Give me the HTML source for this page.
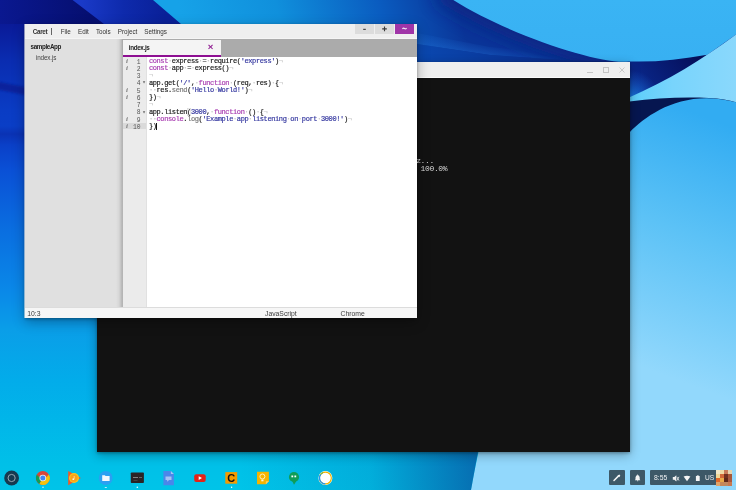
<!DOCTYPE html>
<html><head><meta charset="utf-8">
<style>
*{margin:0;padding:0;box-sizing:border-box}
html,body{width:736px;height:490px;overflow:hidden;background:#0a60c8}
body{position:relative;font-family:"Liberation Sans",sans-serif;-webkit-font-smoothing:antialiased}
#wall{position:absolute;left:0;top:0}
.abs{position:absolute}
#caret,#term{will-change:transform}
/* terminal */
#term{left:97px;top:62px;width:533px;height:390px;background:#121212;box-shadow:0 1px 3px rgba(0,0,0,.3),0 3px 10px rgba(0,0,0,.3)}
#term .tb{position:absolute;left:0;top:0;width:100%;height:16px;background:#efefef;border-bottom:1px solid #fafafa}
#term .txt{position:absolute;left:0;top:156px;font-family:"Liberation Mono",monospace;font-size:8px;letter-spacing:-0.37px;line-height:7.3px;color:#d8d8d8;white-space:pre}
/* caret */
#caret{left:25px;top:24px;width:392px;height:294px;background:#e1e1e1;box-shadow:-0.6px 0 0 0 #e6e6e6,0 1px 3px rgba(0,0,0,.3),0 4px 12px rgba(0,0,0,.3)}
#menu{position:absolute;left:0;top:0;width:100%;height:15.2px;background:#efefef;box-shadow:inset 0 -1px #f5f5f5;font-size:6.3px;color:#333}
#menu span{position:absolute;top:3.5px}
.btn{position:absolute;top:0;height:10px;width:19px;background:#dcdcdc}
#side{position:absolute;left:0;top:15.2px;width:98.2px;height:268.8px;background:linear-gradient(90deg,#e0e0e0 0,#e0e0e0 91px,#d6d6d6 94px,#c2c2c2 96px,#b2b2b2 97.2px,#bababa 98.2px)}
#tabs{position:absolute;left:97px;top:15.2px;width:295px;height:17.8px;background:#ababab}
#tab{position:absolute;left:0.8px;top:0.8px;width:98.2px;height:17px;background:#f4f4f4;border-bottom:2px solid #8e0f92}
#gut{position:absolute;left:98.2px;top:33px;width:23.3px;height:251px;background:#ebebeb}
#code{position:absolute;left:121.5px;top:33px;width:270.5px;height:251px;background:#fff}
#status{position:absolute;left:0;top:282.7px;width:100%;height:11.3px;background:#f6f6f6;border-top:1px solid #dcdcdc;font-size:6.8px;color:#3a3a3a}
.ln{position:absolute;font-family:"Liberation Mono",monospace;font-size:6.37px;line-height:7.27px;white-space:pre;color:#222}
.k{color:#a83cb0}.p{color:#7a7a7a}.s{color:#3538a0}.n{color:#3538a0}.w{color:#c8c8c8}.g{color:#999}
/* shelf */
.ico{position:absolute;top:471px;width:14px;height:14px}
.dot{position:absolute;top:485.5px;width:1.5px;height:1.5px;background:#fff;border-radius:50%}
.sb{position:absolute;top:470px;height:15px;background:#3d5867;border-radius:1px}
</style></head><body>
<svg id="wall" width="736" height="490" viewBox="0 0 736 490">
<defs>
<linearGradient id="gBase" gradientUnits="userSpaceOnUse" x1="0" y1="0" x2="0" y2="490">
<stop offset="0.0000" stop-color="#0a1890"/>
<stop offset="0.0490" stop-color="#0a1a98"/>
<stop offset="0.1224" stop-color="#0a2cb0"/>
<stop offset="0.2245" stop-color="#0a3cc4"/>
<stop offset="0.2571" stop-color="#0a3ec6"/>
<stop offset="0.2735" stop-color="#0a32b4"/>
<stop offset="0.2959" stop-color="#0a40c8"/>
<stop offset="0.3469" stop-color="#0a50d6"/>
<stop offset="0.4694" stop-color="#0a6ee0"/>
<stop offset="0.5918" stop-color="#0a88e8"/>
<stop offset="0.6735" stop-color="#0a9ee8"/>
<stop offset="0.7755" stop-color="#02acea"/>
<stop offset="0.9469" stop-color="#00c0e8"/>
<stop offset="1.0000" stop-color="#00c4e8"/>
</linearGradient>
<linearGradient id="gBand" gradientUnits="userSpaceOnUse" x1="82" y1="0" x2="165" y2="0">
<stop offset="0" stop-color="#1a3ac8"/>
<stop offset="0.5" stop-color="#0e2aac"/>
<stop offset="1" stop-color="#0a2098"/>
</linearGradient>
<linearGradient id="gDark" gradientUnits="userSpaceOnUse" x1="0" y1="0" x2="90" y2="0">
<stop offset="0" stop-color="#0a1890"/>
<stop offset="1" stop-color="#060f70"/>
</linearGradient>
<linearGradient id="gTop" gradientUnits="userSpaceOnUse" x1="185" y1="30" x2="445" y2="-40">
<stop offset="0" stop-color="#16a2e8"/>
<stop offset="0.35" stop-color="#1090dc"/>
<stop offset="0.72" stop-color="#0a5cc0"/>
<stop offset="1" stop-color="#0a3598"/>
</linearGradient>
<linearGradient id="gNavy" gradientUnits="userSpaceOnUse" x1="417" y1="30" x2="630" y2="62">
<stop offset="0" stop-color="#0a48b8"/>
<stop offset="0.5" stop-color="#0a3298"/>
<stop offset="1" stop-color="#081c70"/>
</linearGradient>
<linearGradient id="gStreak" gradientUnits="userSpaceOnUse" x1="417" y1="0" x2="600" y2="0">
<stop offset="0" stop-color="#1e66cc" stop-opacity="0.9"/>
<stop offset="1" stop-color="#1e66cc" stop-opacity="0"/>
</linearGradient>
<linearGradient id="gUp" gradientUnits="userSpaceOnUse" x1="0" y1="0" x2="0" y2="62">
<stop offset="0" stop-color="#3ab4f4"/>
<stop offset="1" stop-color="#38b0f2"/>
</linearGradient>
<linearGradient id="gWedge" gradientUnits="userSpaceOnUse" x1="630" y1="0" x2="736" y2="0">
<stop offset="0" stop-color="#5ccefa"/>
<stop offset="0.4" stop-color="#78d4fc"/>
<stop offset="1" stop-color="#8ad8fc"/>
</linearGradient>
<radialGradient id="gGlow" gradientUnits="userSpaceOnUse" cx="630" cy="100" r="30">
<stop offset="0" stop-color="#1a80e4" stop-opacity="1"/>
<stop offset="1" stop-color="#1a60d0" stop-opacity="0"/>
</radialGradient>
<linearGradient id="gRight" gradientUnits="userSpaceOnUse" x1="700" y1="115" x2="610" y2="355">
<stop offset="0" stop-color="#32acf2"/>
<stop offset="0.45" stop-color="#5cc2f6"/>
<stop offset="1" stop-color="#92d8fc"/>
</linearGradient>
<linearGradient id="gShade" gradientUnits="userSpaceOnUse" x1="240" y1="0" x2="478" y2="0">
<stop offset="0" stop-color="#0a3a90" stop-opacity="0"/>
<stop offset="0.55" stop-color="#0a3a90" stop-opacity="0.15"/>
<stop offset="1" stop-color="#0a3a90" stop-opacity="0.62"/>
</linearGradient>
<linearGradient id="gLstreak" gradientUnits="userSpaceOnUse" x1="0" y1="0" x2="0" y2="1">
<stop offset="0" stop-color="#0a1890"/>
</linearGradient>
<filter id="blur8" x="-50%" y="-50%" width="200%" height="200%"><feGaussianBlur stdDeviation="9"/></filter>
<linearGradient id="gEdge" gradientUnits="userSpaceOnUse" x1="419" y1="30" x2="416" y2="45">
<stop offset="0" stop-color="#1a62c8" stop-opacity="0"/>
<stop offset="1" stop-color="#1a62c8" stop-opacity="0.7"/>
</linearGradient>
<linearGradient id="gLow" gradientUnits="userSpaceOnUse" x1="417" y1="0" x2="630" y2="0">
<stop offset="0" stop-color="#0a48b0"/>
<stop offset="0.5" stop-color="#0a3496"/>
<stop offset="1" stop-color="#081c70"/>
</linearGradient>
<filter id="blur1" x="-20%" y="-100%" width="140%" height="300%"><feGaussianBlur stdDeviation="1.3"/></filter>
<linearGradient id="gNv2" gradientUnits="userSpaceOnUse" x1="700" y1="58" x2="640" y2="100">
<stop offset="0" stop-color="#050e58"/>
<stop offset="1" stop-color="#0a2a90"/>
</linearGradient>
</defs>
<rect width="736" height="490" fill="url(#gBase)"/>
<!-- left dark streak -->
<path d="M-5,81 L30,88 L30,96 L-5,89 Z" fill="#0a1888" opacity="0.6" filter="url(#blur1)"/>
<!-- top-left dark -->
<polygon points="25,0 72.6,0 112,30 25,30" fill="url(#gDark)"/>
<polygon points="0,0 25,0 25,24 0,24" fill="url(#gDark)"/>
<!-- lighter band -->
<polygon points="72.6,0 153,0 188,30 112,30" fill="url(#gBand)"/>
<!-- sky band -->
<polygon points="153,0 736,0 736,80 417,80 417,30 188,30" fill="url(#gTop)"/>
<path d="M440,-10 C513.8,36 606,63.7 640,60" stroke="#0a2280" stroke-width="22" fill="none" filter="url(#blur8)" opacity="0.85"/>
<path d="M417,33 L490,47 L600,58 L600,62 L490,55 L417,44 Z" fill="url(#gEdge)"/>
<path d="M417,44 L490,55 L560,60 L630,62 L630,80 L417,80 Z" fill="url(#gLow)"/>
<rect x="628" y="55" width="108" height="110" fill="url(#gNv2)"/>
<!-- upper light region -->
<path d="M453.3,0 C513.8,38 606,65.7 628.6,61.4 C654.8,62.3 680.7,59.5 707.2,54.7 L736,34.4 L736,0 Z" fill="url(#gUp)"/>
<!-- glow in navy -->
<rect x="600" y="60" width="110" height="50" fill="url(#gGlow)"/>
<!-- wedge -->
<path d="M590,118 L628,97.9 C667.7,80.6 702.3,59.6 736,34.4 L736,120 L590,120 Z" fill="url(#gWedge)"/>
<!-- navy band below wedge -->
<path d="M590,106 L629.5,101.6 C655.7,98.1 681.9,96.7 708.7,97.9 C720,98.4 729,100 736,102.3 L736,160 L590,160 Z" fill="#061650"/>
<!-- lower light region -->
<path d="M471,490 C492.6,370 539,212 629.5,132.4 C647.7,113.9 683.9,88.2 736,102.3 L736,490 Z" fill="url(#gRight)"/>
<!-- shade near boundary bottom -->
<path d="M200,430 L482,430 L471,490 L200,490 Z" fill="url(#gShade)"/>
</svg>

<div id="term" class="abs">
 <div class="tb">
  <div class="abs" style="left:490px;top:9.5px;width:6px;height:1px;background:#c4c4c4"></div>
  <div class="abs" style="left:506px;top:5px;width:6px;height:6px;border:1px solid #c4c4c4"></div>
  <svg class="abs" style="left:521.5px;top:4.5px" width="6" height="6" viewBox="0 0 6 6"><path d="M0.5,0.5L5.5,5.5M5.5,0.5L0.5,5.5" stroke="#c4c4c4" stroke-width="0.9"/></svg>
 </div>
 <div class="txt" style="left:319.2px;top:95.3px">z...
 100.0%</div>
</div>

<div id="caret" class="abs">
 <div id="menu">
  <span style="left:7.7px;font-weight:bold;letter-spacing:-0.3px">Caret</span>
  <span style="left:26.3px;top:4.3px;width:0.7px;height:6.3px;background:#666"></span>
  <span style="left:35.7px">File</span>
  <span style="left:53px">Edit</span>
  <span style="left:70.9px">Tools</span>
  <span style="left:92.7px">Project</span>
  <span style="left:119.2px">Settings</span>
  <div class="btn" style="left:330px"><svg class="abs" style="left:0;top:0" width="19" height="10"><rect x="8.2" y="4.8" width="2.6" height="1.1" fill="#3a3a3a"/></svg></div>
  <div class="btn" style="left:350.1px"><svg class="abs" style="left:0;top:0" width="19" height="10"><path d="M9.5,2.6 V7.2 M7.2,4.9 H11.8" stroke="#3a3a3a" stroke-width="1.1"/></svg></div>
  <div class="btn" style="left:370.1px;background:#a035a8"><svg class="abs" style="left:0;top:0" width="19" height="10"><path d="M7.4,4.9 Q8.5,3.7 9.5,4.5 Q10.5,5.3 11.6,4.1" stroke="#f4e8f6" stroke-width="1.1" fill="none"/></svg></div>
 </div>
 <div id="side">
  <span class="abs" style="left:5.6px;top:4.1px;font-size:6.3px;font-weight:bold;color:#222;letter-spacing:-0.4px">sampleApp</span>
  <span class="abs" style="left:11px;top:14.8px;font-size:6.3px;color:#444;letter-spacing:-0.15px">index.js</span>
 </div>
 <div id="tabs"><div id="tab">
  <span class="abs" style="left:6px;top:4.2px;font-size:6.3px;font-weight:bold;color:#222;letter-spacing:-0.35px">index.js</span>
  <span class="abs" style="left:85px;top:1.2px;font-size:9.5px;font-weight:bold;color:#8e1a90">&#215;</span>
 </div></div>
 <div id="gut">
<div class="abs" style="left:0;top:65.9px;width:23.3px;height:6.6px;background:#dadada"></div>
<div class="ln g" style="left:2.8px;top:0.6px;font-family:'Liberation Serif',serif;font-style:italic;font-weight:bold;font-size:7px;color:#7a7a7a">i<br>i<br> <br> <br>i<br>i<br> <br> <br>i<br>i</div>
<div class="ln" style="left:5.4px;top:1.5px;color:#555;text-align:right;width:12px">1<br>2<br>3<br>4<br>5<br>6<br>7<br>8<br>9<br>10</div>
<div class="ln" style="left:19px;top:0.4px;color:#666;font-size:6px;line-height:7.32px">&nbsp;<br>&nbsp;<br>&nbsp;<br>&#9662;<br>&nbsp;<br>&nbsp;<br>&nbsp;<br>&#9662;</div>
</div>
 <div id="code"><div class="ln" style="left:2.4px;top:0.6px;font-size:7px;letter-spacing:-0.38px;line-height:7.32px;color:#1a1a1a;-webkit-text-stroke:0.18px"><span class="k">const</span><span class="w">·</span>express<span class="w">·</span>=<span class="w">·</span>require(<span class="s">'express'</span>)<span class="w">¬</span><br><span class="k">const</span><span class="w">·</span>app<span class="w">·</span>=<span class="w">·</span>express()<span class="w">¬</span><br><span class="w">¬</span><br>app.get(<span class="s">'/'</span>,<span class="w">·</span><span class="k">function</span><span class="w">·</span>(req,<span class="w">·</span>res)<span class="w">·</span>{<span class="w">¬</span><br><span class="w">·</span><span class="w">·</span>res.<span class="p">send</span>(<span class="s">'Hello<span class="w">·</span>World!'</span>)<span class="w">¬</span><br>})<span class="w">¬</span><br><span class="w">¬</span><br>app.listen<span style="box-shadow:inset 0 0 0 0.5px #d0d0d0">(</span><span class="n">3000</span>,<span class="w">·</span><span class="k">function</span><span class="w">·</span>()<span class="w">·</span>{<span class="w">¬</span><br><span class="w">·</span><span class="w">·</span><span class="k">console</span>.<span class="p">log</span>(<span class="s">'Example<span class="w">·</span>app<span class="w">·</span>listening<span class="w">·</span>on<span class="w">·</span>port<span class="w">·</span>3000!'</span>)<span class="w">¬</span><br>})<span class="abs" style="left:7.5px;top:65.9px;width:0.9px;height:7px;background:#111"></span></div></div>
 <div id="status">
  <span class="abs" style="left:2.3px;top:2.2px">10:3</span>
  <span class="abs" style="left:240px;top:2.2px">JavaScript</span>
  <span class="abs" style="left:315.5px;top:2.2px">Chrome</span>
 </div>
</div>


<!-- shelf -->
<svg class="abs" style="left:0;top:464px" width="340" height="26" viewBox="0 464 340 26">
 <!-- launcher -->
 <circle cx="11.6" cy="478" r="7.4" fill="#163a50"/>
 <circle cx="11.6" cy="478" r="3.6" fill="none" stroke="#c0cad0" stroke-width="0.75"/>
 <!-- chrome -->
 <circle cx="42.8" cy="478" r="6.9" fill="#db4437"/>
 <path d="M42.8,478 L36.8,474.55 A6.9,6.9 0 0 0 39.35,483.98 Z" fill="#0f9d58"/>
 <path d="M42.8,478 L39.35,483.98 A6.9,6.9 0 0 0 48.8,474.55 Z" fill="#f4c20d"/>
 <path d="M42.8,478 L36.8,474.55 A6.9,6.9 0 0 0 48.8,474.55 Z" fill="#db4437"/>
 <circle cx="42.8" cy="478" r="3.3" fill="#f1f1f1"/>
 <circle cx="42.8" cy="478" r="2.5" fill="#4285f4"/>
 <circle cx="43" cy="487.3" r="0.7" fill="#e8f6fc"/>
 <!-- play music -->
 <path d="M68.2,470.9 L80.9,478 L68.2,485.3 Z" fill="#ef5a28"/>
 <circle cx="74" cy="478" r="5" fill="#fcc419"/>
 <circle cx="74" cy="478" r="3.7" fill="#f9a11b"/>
 <circle cx="73.3" cy="479.2" r="0.9" fill="#fff6d8"/>
 <rect x="73.8" y="476" width="0.6" height="3.2" fill="#fff6d8"/>
 <!-- files -->
 <circle cx="105.7" cy="478" r="6.9" fill="#2aa0f2"/>
 <path d="M102.2,475.2 h2.6 l0.8,0.8 h4 v5 h-7.4 z" fill="#f3f8fd"/>
 <rect x="104.8" y="487" width="2" height="0.8" fill="#e8f6fc"/>
 <!-- terminal -->
 <rect x="130.8" y="472.4" width="13.1" height="10.7" rx="0.8" fill="#2b2424"/>
 <rect x="133" y="477" width="5" height="0.8" fill="#9a9a9a"/>
 <rect x="139" y="477" width="3" height="0.8" fill="#777"/>
 <rect x="133.5" y="480" width="4" height="0.6" fill="#555"/>
 <circle cx="137.3" cy="487.3" r="0.8" fill="#fff"/>
 <!-- docs -->
 <path d="M163.4,470.9 h7.5 l3,3 v11.4 h-10.5 z" fill="#4a87ea"/>
 <path d="M170.9,470.9 l3,3 h-3 z" fill="#a6c4f4"/>
 <rect x="165.5" y="476.5" width="6" height="3.5" fill="#a4c2f4"/>
 <path d="M167,480 l0.5,1.8 l1.5,-1.8z" fill="#a4c2f4"/>
 <!-- youtube -->
 <rect x="194.2" y="474.2" width="11.5" height="7.8" rx="2" fill="#e62117"/>
 <path d="M198.7,476.3 l3.3,1.8 l-3.3,1.8 z" fill="#fff"/>
 <!-- caret -->
 <rect x="225.3" y="472.1" width="11.9" height="11.6" fill="#f59b00"/>
 <text x="231.3" y="481.9" font-family="Liberation Sans" font-weight="bold" font-size="11" text-anchor="middle" fill="#111">C</text>
 <circle cx="231.6" cy="487.3" r="0.7" fill="#fff"/>
 <!-- keep -->
 <path d="M257,471.8 h11.9 v9.5 l-3,3 h-8.9 z" fill="#f6b400"/>
 <path d="M268.9,481.3 l-3,3 v-3 z" fill="#f9d46a"/>
 <circle cx="262.4" cy="476.5" r="2.5" fill="none" stroke="#fff3cf" stroke-width="0.9"/>
 <rect x="261.3" y="479.5" width="2.2" height="1.8" fill="#fff3cf"/>
 <!-- hangouts -->
 <circle cx="294" cy="477" r="5.1" fill="#0f9d58"/>
 <path d="M292.2,481 l1.8,3.8 l2.8,-4.4 z" fill="#0f9d58"/>
 <rect x="291.4" y="475.5" width="1.8" height="1.8" fill="#fff"/>
 <rect x="294.4" y="475.5" width="1.8" height="1.8" fill="#fff"/>
 <!-- circle app -->
 <circle cx="325.4" cy="478" r="7" fill="#fff"/>
 <circle cx="325.4" cy="478" r="5.9" fill="none" stroke="#f4b400" stroke-width="1.3"/>
 <path d="M320.8,474.3 A5.9,5.9 0 0 0 325.4,483.9" fill="none" stroke="#2196f3" stroke-width="1.3"/>
 <path d="M320.8,474.3 A5.9,5.9 0 0 1 323,472.6" fill="none" stroke="#7cb342" stroke-width="1.3"/>
 <circle cx="325.4" cy="478" r="5" fill="#fff"/>
</svg>
<!-- status -->
<div class="sb" style="left:609.4px;width:15.7px"></div>
<svg class="abs" style="left:609.4px;top:470px" width="16" height="16" viewBox="0 0 16 16"><path d="M5,10.5 L9.6,5.9" stroke="#f4f4f4" stroke-width="1.5" stroke-linecap="round"/><path d="M8.6,5.6 L10.4,4.6 L11.3,5.5 L10.3,7.2 Z" fill="#f4f4f4"/></svg>
<div class="sb" style="left:629.8px;width:15.3px"></div>
<svg class="abs" style="left:629.8px;top:470px" width="16" height="16" viewBox="0 0 16 16"><path d="M4.9,10.2 L5.5,9.3 L5.5,7.4 Q5.7,5.2 7.6,5 Q9.5,5.2 9.7,7.4 L9.7,9.3 L10.3,10.2 Z" fill="#f4f4f4"/><rect x="7" y="10.4" width="1.2" height="0.8" fill="#f4f4f4"/><rect x="7.3" y="4.4" width="0.6" height="0.8" fill="#f4f4f4"/></svg>
<div class="sb" style="left:649.9px;width:66.2px;border-radius:1px 0 0 1px"></div>
<span class="abs" style="left:653.6px;top:474.2px;font-size:6.8px;color:#eef0f2;will-change:transform">8:55</span>
<svg class="abs" style="left:670px;top:470px" width="48" height="16" viewBox="0 0 48 16">
 <path d="M2.8,7 h1.5 l2,-1.7 v6.2 l-2,-1.7 h-1.5z" fill="#f0f0f0"/>
 <path d="M6.8,6.8 l2.2,3.8 M9,6.8 l-2.2,3.8" stroke="#f0f0f0" stroke-width="0.8"/>
 <path d="M13.6,6.6 Q17,4.9 20.4,6.6 L17,11.2 Z" fill="#f4f4f4"/>
 <rect x="25.9" y="6" width="3.8" height="5" fill="#f4f4f4"/>
 <rect x="26.9" y="5.4" width="1.8" height="0.7" fill="#f4f4f4"/>
</svg>
<span class="abs" style="left:704.7px;top:474.2px;font-size:6.6px;color:#eef0f2;will-change:transform">US</span>
<svg class="abs" style="left:716px;top:470.2px" width="16" height="15.6" viewBox="0 0 4 4" preserveAspectRatio="none" shape-rendering="crispEdges">
<rect x="0" y="0" width="1" height="1" fill="#f2e8c8"/><rect x="1" y="0" width="1" height="1" fill="#eedca8"/><rect x="2" y="0" width="1" height="1" fill="#c87a58"/><rect x="3" y="0" width="1" height="1" fill="#e4d4b0"/>
<rect x="0" y="1" width="1" height="1" fill="#f0d898"/><rect x="1" y="1" width="1" height="1" fill="#d06838"/><rect x="2" y="1" width="1" height="1" fill="#703020"/><rect x="3" y="1" width="1" height="1" fill="#a85838"/>
<rect x="0" y="2" width="1" height="1" fill="#e06828"/><rect x="1" y="2" width="1" height="1" fill="#e8a848"/><rect x="2" y="2" width="1" height="1" fill="#602818"/><rect x="3" y="2" width="1" height="1" fill="#a85840"/>
<rect x="0" y="3" width="1" height="1" fill="#e0a468"/><rect x="1" y="3" width="1" height="1" fill="#c88858"/><rect x="2" y="3" width="1" height="1" fill="#c08860"/><rect x="3" y="3" width="1" height="1" fill="#c87850"/>
</svg>
</body></html>
